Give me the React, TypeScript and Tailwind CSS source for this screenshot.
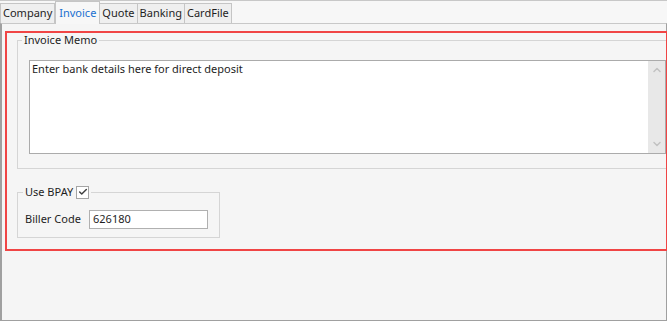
import { Check, ChevronDown, ChevronUp } from 'lucide-react';

const tabs = ['Company', 'Invoice', 'Quote', 'Banking', 'CardFile'];

export default function App() {
  const active = 'Invoice';

  return (
    <div className="w-[667px] h-[321px] bg-[#f5f5f5] flex flex-col text-[11px] text-[#1e1e1e] [font-family:'Noto_Sans',Arial,sans-serif] overflow-hidden">
      {/* tab strip */}
      <div className="h-[23px] flex items-end border-t border-[#c8c8c8] bg-[#f7f7f7]">
        {tabs.map((tab) =>
          tab === active ? (
            <div
              key={tab}
              className="h-[23px] px-[3px] flex items-center border border-b-0 border-[#c5c5c5] bg-[#f7f7f7] text-[#1a6fd0] -mb-px relative"
            >
              {tab}
            </div>
          ) : (
            <div
              key={tab}
              className="h-[20px] px-[2px] flex items-center border border-b-0 border-l-0 first:border-l border-[#c5c5c5] bg-[#efefef]"
            >
              {tab}
            </div>
          )
        )}
      </div>

      {/* tab page */}
      <div className="flex-1 border border-[#a0a0a0] border-t-[#c8c8c8] border-l-2 bg-[#f5f5f5] pt-[7px] pl-[3px]">
        <div className="border-2 border-[#f04545] mr-[-2px] pl-[10px] pb-[11px]">
          <fieldset className="border border-r-0 border-[#d5d5d5] pl-[11px] pb-[14px] pt-[13px]">
            <legend className="ml-[-7px] px-[2px] leading-[14px]">Invoice Memo</legend>
            <div className="h-[94px] border border-[#ababab] bg-white flex">
              <div className="flex-1 pl-[2px] pt-[1px] leading-[14px]">
                Enter bank details here for direct deposit
              </div>
              <div className="w-[17px] bg-[#e8e8e8] flex flex-col justify-between items-center py-[3px] text-[#c2c2c2]">
                <ChevronUp size={12} strokeWidth={3} />
                <ChevronDown size={12} strokeWidth={3} />
              </div>
            </div>
          </fieldset>

          <fieldset className="mt-[16px] w-[203px] border border-[#d5d5d5] pl-[7px] pb-[8px] pt-[11px]">
            <legend className="ml-[-2px] px-[2px] flex items-center gap-[3px] leading-[14px]">
              <span>Use BPAY</span>
              <span className="w-[13px] h-[13px] border border-[#a5a5a5] bg-white flex items-center justify-center text-[#404040]">
                <Check size={10} strokeWidth={3.5} />
              </span>
            </legend>
            <div className="flex items-center">
              <span className="w-[64px]">Biller Code</span>
              <div className="w-[119px] h-[19px] border border-[#b0b0b0] bg-white pl-[3px] flex items-center">
                626180
              </div>
            </div>
          </fieldset>
        </div>
      </div>
    </div>
  );
}
